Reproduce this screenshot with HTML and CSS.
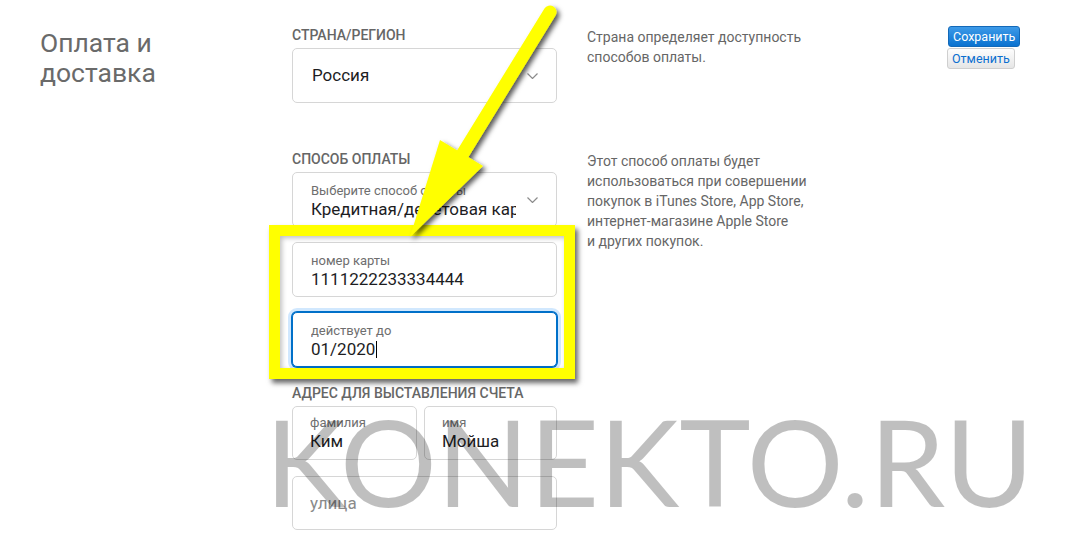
FILE: index.html
```html
<!DOCTYPE html>
<html lang="ru">
<head>
<meta charset="utf-8">
<title>Оплата и доставка</title>
<link rel="stylesheet" href="styles.css">
</head>
<body>
<div class="page">
  <h1 class="title">Оплата и<br>доставка</h1>
  <div class="main">
    <section class="section s-country">
      <div class="form">
        <div class="label">Страна/регион</div>
        <div class="field select">
          <span class="value">Россия</span>
          <svg class="chev" width="11" height="6" viewBox="0 0 11 6"><polyline points="0.5,0.5 5.5,5.5 10.5,0.5"/></svg>
        </div>
      </div>
      <p class="help">Страна определяет доступность<br>способов оплаты.</p>
    </section>
    <section class="section s-payment">
      <div class="form">
        <div class="label">Способ оплаты</div>
        <div class="stack">
          <div class="field select labeled">
            <div class="text"><span class="small">Выберите способ оплаты</span><span class="value">Кредитная/дебетовая карта</span></div>
            <svg class="chev" width="11" height="6" viewBox="0 0 11 6"><polyline points="0.5,0.5 5.5,5.5 10.5,0.5"/></svg>
          </div>
          <div class="field labeled">
            <div class="text"><span class="small">номер карты</span><span class="value">1111222233334444</span></div>
          </div>
          <div class="field labeled focus">
            <div class="text"><span class="small">действует до</span><span class="value">01/2020<span class="caret"></span></span></div>
          </div>
        </div>
      </div>
      <p class="help">Этот способ оплаты будет<br>использоваться при совершении<br>покупок в iTunes Store, App Store,<br>интернет-магазине Apple Store<br>и других покупок.</p>
    </section>
    <section class="section s-billing">
      <div class="form">
        <div class="label">Адрес для выставления счета</div>
        <div class="stack stack-billing">
          <div class="row2">
            <div class="field labeled short">
              <div class="text"><span class="small">фамилия</span><span class="value">Ким</span></div>
            </div>
            <div class="field labeled short">
              <div class="text"><span class="small">имя</span><span class="value">Мойша</span></div>
            </div>
          </div>
          <div class="field short placeholder"><span class="value">улица</span></div>
        </div>
      </div>
    </section>
  </div>
  <div class="actions">
    <button class="btn primary">Сохранить</button>
    <button class="btn secondary">Отменить</button>
  </div>
</div>
<div class="watermark">KONEKTO.RU</div>
<div class="frame"></div>
<svg class="arrow" width="1072" height="539" viewBox="0 0 1072 539">
  <defs>
    <filter id="sh" x="-30%" y="-10%" width="160%" height="130%">
      <feDropShadow dx="3" dy="3" stdDeviation="2.5" flood-color="#000" flood-opacity="0.65"/>
    </filter>
  </defs>
  <g filter="url(#sh)">
    <line x1="550" y1="12" x2="462" y2="155" stroke="#ffff00" stroke-width="13" stroke-linecap="round"/>
    <polygon points="440,140 483,166 410,237" fill="#ffff00"/>
  </g>
</svg>
</body>
</html>
```

FILE: styles.css
```css
html, body {
  margin: 0;
  padding: 0;
  background: #fff;
  width: 1072px;
  height: 539px;
  overflow: hidden;
  font-family: Roboto, "Liberation Sans", sans-serif;
  color: #333;
}

.page {
  display: flex;
  align-items: flex-start;
  padding: 27px 0 0 40px;
}

.title {
  width: 252px;
  flex: none;
  margin: 1px 0 0;
  font-weight: 400;
  font-size: 26.5px;
  line-height: 30px;
  color: #6a6a6a;
}

.main {
  width: 656px;
  flex: none;
  display: flex;
  flex-direction: column;
}

.section {
  display: grid;
  grid-template-columns: 265px 361px;
  column-gap: 30px;
  align-items: start;
}

.s-country { margin-bottom: 48px; }
.s-billing { margin-top: 18px; }

.label {
  font-size: 14px;
  line-height: 17px;
  font-weight: 500;
  text-transform: uppercase;
  color: #666;
  margin-bottom: 4px;
}

.stack {
  display: flex;
  flex-direction: column;
  gap: 15px;
}

.stack-billing { gap: 16px; }

.row2 {
  display: grid;
  grid-template-columns: 125px 133px;
  column-gap: 7px;
}

.field {
  box-sizing: border-box;
  height: 55px;
  border: 1px solid #d6d6d6;
  border-radius: 5px;
  background: #fff;
  display: flex;
  align-items: center;
  padding: 0 18px;
  position: relative;
}

.field.short { height: 54px; }

.field.select { padding-right: 40px; }

.field.labeled {
  align-items: flex-start;
  padding-top: 10px;
}

.field.labeled.short { padding-top: 8px; padding-left: 17px; }

.text {
  display: flex;
  flex-direction: column;
  min-width: 0;
  width: 100%;
  overflow: hidden;
}

.small {
  font-size: 13px;
  line-height: 16px;
  color: #6e6e6e;
  white-space: nowrap;
}

.value {
  font-size: 17px;
  line-height: 21px;
  color: #1d1d1f;
  white-space: nowrap;
  overflow: hidden;
}

.s-country .value { padding-left: 1px; }

.placeholder { padding-left: 17px; }
.placeholder .value { color: #8a8a8a; }

.chev {
  position: absolute;
  right: 18px;
  top: 50%;
  margin-top: -3px;
  fill: none;
  stroke: #8c8c8c;
  stroke-width: 1.2;
}

.field.focus {
  border-color: #0070c9;
  box-shadow: 0 0 0 1px #0070c9, 0 0 0 4px rgba(0, 125, 250, 0.18);
}

.caret {
  display: inline-block;
  width: 0;
  height: 17px;
  border-left: 1px solid #000;
  margin-left: 1px;
  vertical-align: -3px;
}

.help {
  margin: 0;
  font-size: 14px;
  line-height: 20px;
  color: #666;
}

.actions {
  display: flex;
  flex-direction: column;
  align-items: flex-start;
  gap: 1px;
  margin-top: -1px;
}

.btn {
  box-sizing: border-box;
  height: 21px;
  padding: 0 4px;
  font-family: Roboto, "Liberation Sans", sans-serif;
  font-size: 12.5px;
  line-height: 19px;
  border-radius: 3px;
  cursor: pointer;
}

.btn.primary {
  color: #fff;
  background: linear-gradient(#3d9ae8, #0a72d0);
  border: 1px solid #1369b8;
}

.btn.secondary {
  margin-left: -1px;
  color: #0b6fd0;
  background: linear-gradient(#fdfdfd, #e6e6e6);
  border: 1px solid #cfcfcf;
}

.watermark {
  position: absolute;
  left: 265px;
  top: 400px;
  font-family: Lato, "Open Sans", sans-serif;
  font-weight: 400;
  font-size: 121px;
  line-height: 1;
  color: rgba(0, 0, 0, 0.25);
  white-space: nowrap;
  pointer-events: none;
}

.frame {
  position: absolute;
  left: 269px;
  top: 225px;
  width: 306px;
  height: 154px;
  box-sizing: border-box;
  border: 11px solid #ffff00;
  box-shadow: 3px 4px 5px rgba(0, 0, 0, 0.6), inset 2px 2px 5px rgba(0, 0, 0, 0.25);
  pointer-events: none;
}

.arrow {
  position: absolute;
  left: 0;
  top: 0;
  pointer-events: none;
}
```
